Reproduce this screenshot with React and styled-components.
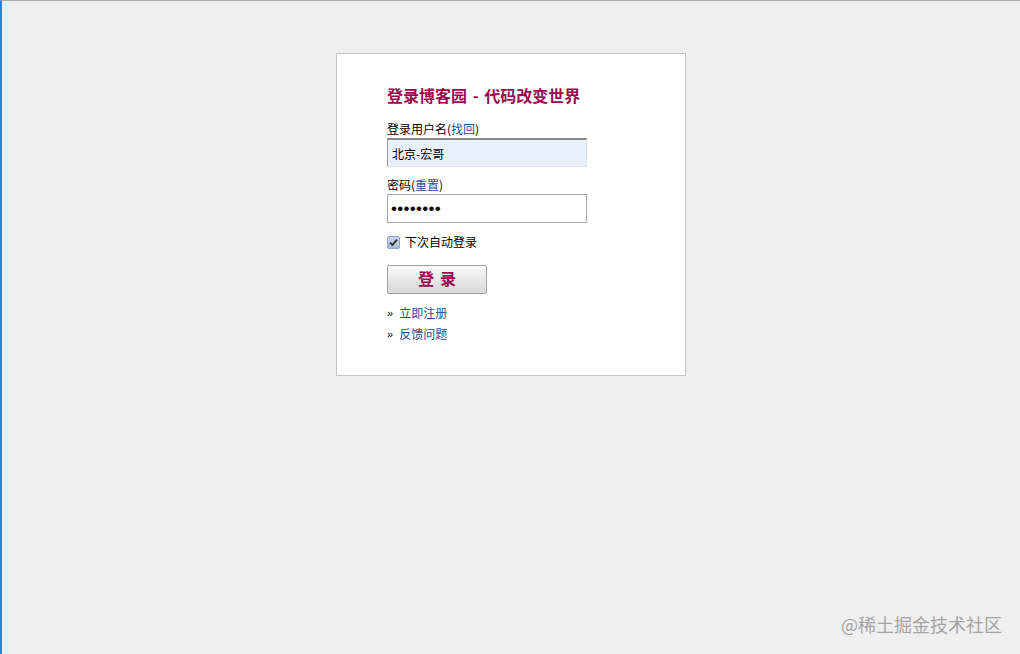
import React from 'react';
import styled, { createGlobalStyle } from 'styled-components';

const GlobalStyle = createGlobalStyle`
  html, body {
    margin: 0;
    padding: 0;
    background: #efefef;
  }
  body {
    font-family: "Noto Sans CJK SC", "Liberation Sans", sans-serif;
    font-size: 12px;
    color: #000;
  }
`;

const Page = styled.div`
  position: relative;
  box-sizing: border-box;
  height: 654px;
  border-top: 1px solid #a9a9a9;
  border-left: 2px solid #1e8ad6;
  padding-top: 52px;
  overflow: hidden;
`;

const Card = styled.div`
  box-sizing: border-box;
  width: 350px;
  height: 323px;
  margin: 0 auto;
  background: #fff;
  border: 1px solid #c6c6c6;
  padding: 31px 50px 0;
`;

const Title = styled.h2`
  margin: 0 0 16px;
  font-size: 16px;
  line-height: 20px;
  font-weight: 700;
  word-spacing: 2px;
  color: #990a4f;
`;

const Label = styled.div`
  line-height: 16px;
  margin-bottom: 1px;
`;

const Link = styled.a`
  color: #1d4f8f;
  text-decoration: none;
  cursor: pointer;
`;

const Input = styled.input`
  box-sizing: border-box;
  display: block;
  width: 200px;
  height: 29px;
  margin: 0 0 ${(p) => p.$after}px;
  padding: 0 4px;
  font-family: "Noto Sans CJK SC", "Liberation Sans", sans-serif;
  font-size: 12px;
  color: #000;
  outline: none;
  background: ${(p) => (p.$filled ? '#e8effd' : '#fff')};
  border: 1px solid #a9a9a9;
  ${(p) =>
    p.$filled &&
    `
    border-top: 2px solid #8a8a8a;
    border-left: 1px solid #9a9a9a;
    border-right: 1px solid #e2e2e2;
    border-bottom: 1px solid #e2e2e2;
  `}
  &[type='password'] {
    font-family: "Liberation Sans", sans-serif;
    font-size: 17px;
    letter-spacing: 0.3px;
    padding-left: 3px;
  }
`;

const CheckRow = styled.label`
  display: flex;
  align-items: center;
  gap: 5px;
  line-height: 16px;
  margin-bottom: 15px;
  cursor: pointer;
`;

const Box = styled.span`
  box-sizing: border-box;
  width: 13px;
  height: 13px;
  border: 1px solid #8ea6c8;
  border-radius: 2px;
  background: linear-gradient(#c9d7ea, #a8bcd8);
  display: flex;
  align-items: center;
  justify-content: center;
`;

const Button = styled.button`
  box-sizing: border-box;
  display: block;
  width: 100px;
  height: 29px;
  margin-bottom: 8px;
  padding: 0 0 3px;
  border: 1px solid #a2a2a2;
  border-radius: 2px;
  background: linear-gradient(#fbfbfb, #e6e6e6 55%, #d9d9d9);
  font-family: "Noto Sans CJK SC", "Liberation Sans", sans-serif;
  font-size: 16px;
  font-weight: 700;
  letter-spacing: 6px;
  text-indent: 6px;
  color: #990a4f;
  cursor: pointer;
`;

const LinkList = styled.ul`
  list-style: none;
  margin: 0;
  padding: 0;
  li {
    display: flex;
    align-items: center;
    height: 21px;
  }
  span {
    margin-right: 6px;
    font-family: "Liberation Sans", sans-serif;
    font-size: 11px;
  }
`;

const Watermark = styled.div`
  position: absolute;
  right: 18px;
  bottom: 17px;
  font-size: 18px;
  color: #a4a4a4;
`;

const App = () => (
  <>
    <GlobalStyle />
    <Page>
      <Card>
        <Title>登录博客园 - 代码改变世界</Title>
        <Label>
          登录用户名(<Link>找回</Link>)
        </Label>
        <Input $filled $after={10} defaultValue="北京-宏哥" />
        <Label>
          密码(<Link>重置</Link>)
        </Label>
        <Input type="password" $after={11} defaultValue="12345678" />
        <CheckRow>
          <Box>
            <svg width="9" height="9" viewBox="0 0 9 9">
              <path d="M1 4.6 L3.4 7 L8 1.6" fill="none" stroke="#2b2b2b" strokeWidth="1.8" />
            </svg>
          </Box>
          下次自动登录
        </CheckRow>
        <Button>登录</Button>
        <LinkList>
          <li>
            <span>»</span>
            <Link>立即注册</Link>
          </li>
          <li>
            <span>»</span>
            <Link>反馈问题</Link>
          </li>
        </LinkList>
      </Card>
      <Watermark>@稀土掘金技术社区</Watermark>
    </Page>
  </>
);

export default App;
